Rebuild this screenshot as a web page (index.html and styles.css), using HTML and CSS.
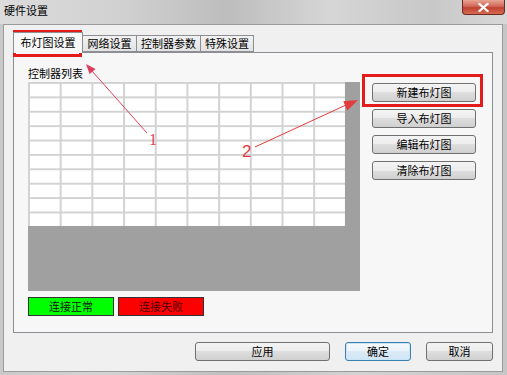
FILE: index.html
```html
<!DOCTYPE html>
<html lang="zh-CN">
<head>
    <meta charset="UTF-8">
    <title>硬件设置</title>
    <link rel="stylesheet" href="styles.css">
</head>
<body>
    <div class="window">
        <div class="titlebar">
            <span class="title">硬件设置</span>
            <button class="close-btn">
                <svg width="11" height="9" viewBox="0 0 11 9">
                    <path d="M1.5 1 L9.5 8 M9.5 1 L1.5 8" stroke="#fff" stroke-width="2.2" stroke-linecap="square"/>
                </svg>
            </button>
        </div>

        <div class="client">
            <div class="tabs">
                <div class="tab active">布灯图设置</div>
                <div class="tab tab-net">网络设置</div>
                <div class="tab tab-ctrl">控制器参数</div>
                <div class="tab tab-special">特殊设置</div>
            </div>

            <div class="panel">
                <div class="list-col">
                    <div class="list-label">控制器列表</div>
                    <div class="list-view">
                        <div class="list-grid"></div>
                    </div>
                    <div class="status-row">
                        <div class="status ok">连接正常</div>
                        <div class="status fail">连接失败</div>
                    </div>
                </div>

                <div class="action-col">
                    <button class="btn btn-action">新建布灯图</button>
                    <button class="btn btn-action">导入布灯图</button>
                    <button class="btn btn-action">编辑布灯图</button>
                    <button class="btn btn-action">清除布灯图</button>
                </div>
            </div>

            <div class="footer">
                <button class="btn btn-apply">应用</button>
                <button class="btn btn-ok">确定</button>
                <button class="btn btn-cancel">取消</button>
            </div>
        </div>

        <!-- 标注：红框和箭头 -->
        <svg class="annotations" width="507" height="375" viewBox="0 0 507 375">
            <rect x="14.5" y="31.5" width="66" height="24" fill="none" stroke="#e41b1b" stroke-width="3"/>
            <rect x="363.5" y="75.5" width="118" height="30" fill="none" stroke="#e41b1b" stroke-width="3"/>

            <line x1="147" y1="133" x2="92" y2="71" stroke="#de3f5e" stroke-width="1"/>
            <polygon points="86,64 95.6,68.9 89.6,74.1" fill="#de3f5e"/>
            <text x="149" y="145" class="mark mark-1">1</text>

            <line x1="255" y1="147" x2="346" y2="105" stroke="#e23c3c" stroke-width="1"/>
            <polygon points="358,100 347.4,110.4 343.2,101.3" fill="#e23c3c"/>
            <text x="242" y="157" class="mark mark-2">2</text>
        </svg>
    </div>
</body>
</html>
```

FILE: styles.css
```css
body {
    margin: 0;
    font-family: "Noto Sans CJK SC", "Liberation Sans", sans-serif;
    font-size: 11px;
    color: #000;
}
.window {
    position: relative;
    width: 507px;
    height: 375px;
    box-sizing: border-box;
    padding: 0 4px 3px 3px;
    background: linear-gradient(to right, #c9c9c9, #d4d4d4 20%, #bfbfbf 45%, #d2d2d2 70%, #c6c6c6);
    overflow: hidden;
}
.titlebar {
    display: flex;
    align-items: flex-start;
    height: 24px;
    margin: 0 -4px 0 -3px;
    background: linear-gradient(to right, #dcdcdc, #d0d0d0 25%, #bdbdbd 45%, #d6d6d6 65%, #c8c8c8 85%, #d8d8d8);
}
.title {
    padding: 3px 0 0 4px;
    line-height: 14px;
    font-size: 11px;
}
.close-btn {
    display: flex;
    align-items: center;
    justify-content: center;
    margin-left: auto;
    margin-right: 2px;
    width: 43px;
    height: 15px;
    padding: 0;
    border: 1px solid #6e2a22;
    border-top: none;
    border-radius: 0 0 4px 4px;
    background: linear-gradient(#e8a593, #d0675a 45%, #c0432f 55%, #d66a4f);
}
.client {
    height: 348px;
    box-sizing: border-box;
    border: 1px solid #9a9a9a;
    background: #f0f0f0;
}

/* 选项卡 */
.tabs {
    display: flex;
    align-items: flex-end;
    height: 20px;
    margin-top: 7px;
    padding-left: 9px;
}
.tab {
    box-sizing: border-box;
    height: 17px;
    line-height: 15px;
    margin-left: -1px;
    text-align: center;
    border: 1px solid #8c8e94;
    background: linear-gradient(#f2f2f2, #e3e3e3);
}
.tab.active {
    position: relative;
    z-index: 1;
    width: 70px;
    height: 21px;
    line-height: 19px;
    margin-left: 0;
    margin-bottom: -1px;
    border-bottom: none;
    background: #f7f7f7;
}
.tab-net { width: 55px; }
.tab-ctrl { width: 65px; }
.tab-special { width: 54px; }

.panel {
    display: flex;
    width: 480px;
    height: 281px;
    box-sizing: border-box;
    margin-left: 9px;
    padding: 13px 0 0 14px;
    border: 1px solid #8c8e94;
    background: #f7f7f7;
}
.list-col {
    width: 332px;
}
.list-label {
    height: 14px;
    line-height: 14px;
    margin-bottom: 2px;
}
.list-view {
    width: 332px;
    height: 209px;
    background: #a0a0a0;
}
.list-grid {
    width: 317px;
    height: 144px;
    background-color: #fff;
    background-image:
        linear-gradient(to right, #d2d2d2 2px, transparent 2px),
        linear-gradient(to bottom, #d2d2d2 2px, transparent 2px);
    background-size: 31.7px 14.4px;
}
.status-row {
    display: flex;
    gap: 4px;
    margin-top: 6px;
}
.status {
    width: 86px;
    height: 19px;
    box-sizing: border-box;
    line-height: 17px;
    text-align: center;
    border: 1px solid #333;
}
.status.ok { background: #00ff00; color: #111; }
.status.fail { background: #ff0000; color: #4a0000; }

.action-col {
    display: flex;
    flex-direction: column;
    gap: 7px;
    margin-left: 12px;
    padding-top: 17px;
}

/* 按钮 */
.btn {
    height: 19px;
    box-sizing: border-box;
    padding: 0;
    font-family: inherit;
    font-size: 11px;
    line-height: 17px;
    color: #000;
    border: 1px solid #707070;
    border-radius: 3px;
    background: linear-gradient(#f4f4f4, #ececec 50%, #dedede 50%, #d0d0d0);
}
.btn-action { width: 104px; }

.footer {
    display: flex;
    justify-content: flex-end;
    gap: 15px;
    margin-top: 9px;
    padding-right: 9px;
}
.btn-apply { width: 135px; }
.btn-ok {
    width: 66px;
    border-color: #3c7fb1;
    background: linear-gradient(#f5fafd, #e9f3fb 50%, #dbebf7 50%, #d0e5f5);
    box-shadow: inset 0 0 0 1px #c8e6f8;
}
.btn-cancel { width: 67px; }

/* 标注 */
.annotations {
    position: absolute;
    left: 0;
    top: 0;
    pointer-events: none;
}
.mark {
    font-size: 16px;
}
.mark-1 {
    font-family: "Liberation Serif", serif;
    fill: #de3f5e;
}
.mark-2 {
    font-family: "Liberation Sans", sans-serif;
    font-size: 17px;
    fill: #e23c3c;
}
```
